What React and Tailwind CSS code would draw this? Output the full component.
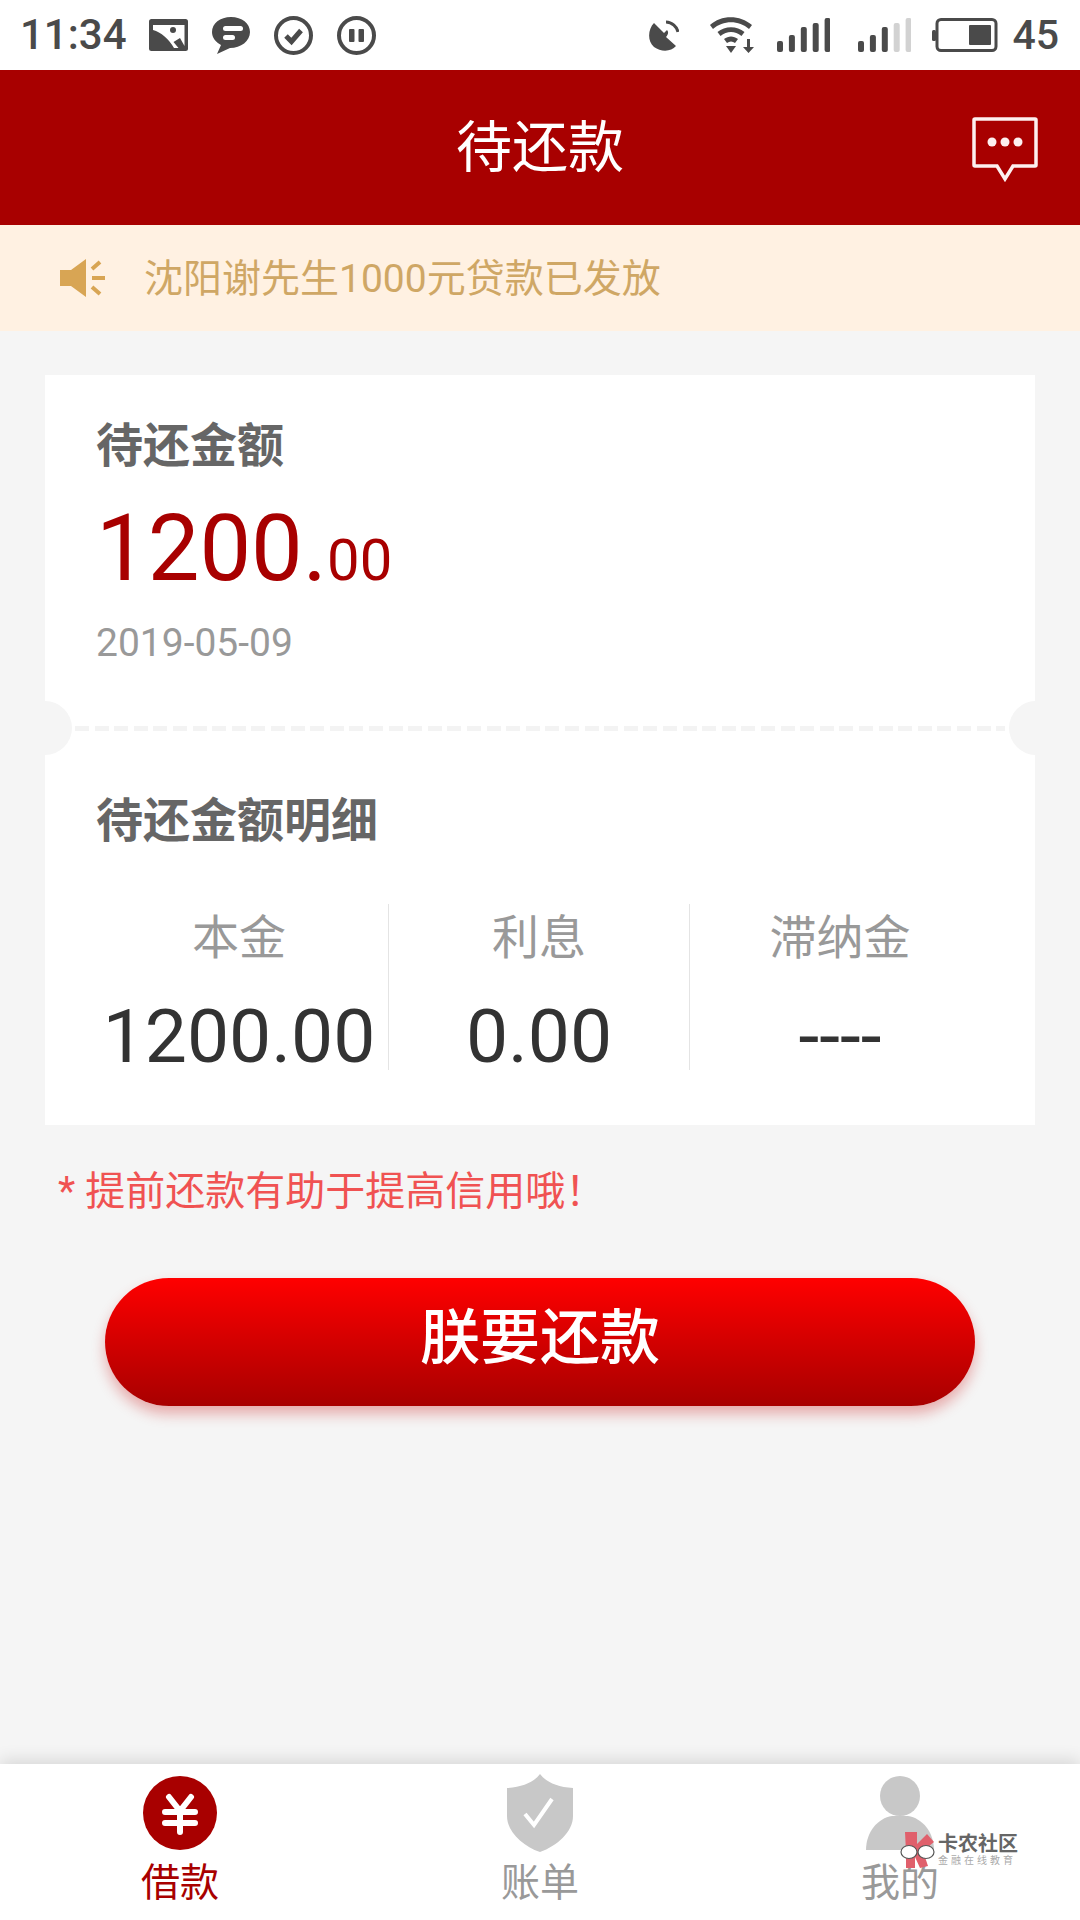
import React from "react";

const cjk = "font-['Roboto','Noto_Sans_CJK_SC',sans-serif]";

const PictureIcon = () => (
  <svg width="39" height="32" viewBox="0 0 39 32">
    <rect width="39" height="32" rx="2.5" fill="#4a4a4a" />
    <path d="M4 6 H35.500 V27 L31 19 L24.500 23 L29.500 29 H25 C20 20 12 13 4 11 Z" fill="#fff" />
    <circle cx="24" cy="11" r="3" fill="#4a4a4a" />
  </svg>
);

const ChatIcon = () => (
  <svg width="38" height="37" viewBox="0 0 38 37">
    <path d="M19 0 C30 0 38 6.500 38 15 C38 24 29 31 18 31 L5 37 L9 28 C3.500 25 0 20.500 0 15 C0 6.500 8 0 19 0 Z" fill="#4a4a4a" />
    <rect x="11" y="9" width="20" height="5" rx="2.500" fill="#fff" />
    <rect x="11" y="18" width="12" height="5" rx="2.500" fill="#fff" />
  </svg>
);

const CheckCircle = () => (
  <svg width="39" height="39" viewBox="0 0 39 39">
    <circle cx="19.500" cy="19.500" r="17.500" fill="none" stroke="#4a4a4a" strokeWidth="4" />
    <path d="M12 20 L17.500 25.500 L27 14.500" fill="none" stroke="#4a4a4a" strokeWidth="5" />
  </svg>
);

const PauseCircle = () => (
  <svg width="39" height="39" viewBox="0 0 39 39">
    <circle cx="19.500" cy="19.500" r="17.500" fill="none" stroke="#4a4a4a" strokeWidth="4" />
    <rect x="12" y="13" width="5.500" height="13" rx="1" fill="#4a4a4a" />
    <rect x="21.500" y="13" width="5.500" height="13" rx="1" fill="#4a4a4a" />
  </svg>
);

const SatelliteIcon = () => (
  <svg width="31" height="31" viewBox="0 0 31 31">
    <path d="M6 3 L16 13 L19 10 C21 12 20 15 18 17 L28 26 C23 32 13 32 6 27 C-1 21 0 9 6 3 Z" fill="#4a4a4a" />
    <path d="M18 2 C24 2 29 7 30 12" fill="none" stroke="#4a4a4a" strokeWidth="3" />
  </svg>
);

const WifiIcon = () => (
  <svg width="46" height="38" viewBox="0 0 46 38">
    <path d="M1 9 C12 -1.500 31 -1.500 43 9 L40 13 C30 4 14 4 4 13 Z" fill="#4a4a4a" />
    <path d="M8.500 16 C16 9.500 28 9.500 35.500 16 L32.500 20 C26 14.500 18 14.500 11.500 20 Z" fill="#4a4a4a" />
    <path d="M15 23 C19.500 19.500 24.500 19.500 29 23 L26 27 C23.500 25 20.500 25 18 27 Z" fill="#4a4a4a" />
    <path d="M17 30 H27 L22 37 Z" fill="#4a4a4a" />
    <path d="M38 20 H41 V28 H45 L39.500 34 L34 28 H38 Z" fill="#4a4a4a" transform="translate(0 3)" />
  </svg>
);

const Signal = ({ dim }) => {
  const bars = [
    { h: 11, c: "#4a4a4a" },
    { h: 17, c: "#4a4a4a" },
    { h: 25, c: "#4a4a4a" },
    { h: 29, c: dim ? "#d2d2d2" : "#4a4a4a" },
    { h: 34, c: dim ? "#d2d2d2" : "#4a4a4a" },
  ];
  return (
    <svg width="53" height="34" viewBox="0 0 53 34">
      {bars.map((b, i) => (
        <rect key={i} x={i * 11.9} y={34 - b.h} width="6" height={b.h} rx="2" fill={b.c} />
      ))}
    </svg>
  );
};

const BatteryIcon = () => (
  <svg width="66" height="34" viewBox="0 0 66 34">
    <rect x="0" y="12" width="4" height="11" rx="1.500" fill="#4a4a4a" />
    <rect x="5" y="1.500" width="59" height="31" rx="4" fill="none" stroke="#4a4a4a" strokeWidth="3" />
    <rect x="37" y="7" width="22" height="20" rx="1" fill="#4a4a4a" />
  </svg>
);

const MessageIcon = () => (
  <svg width="66" height="66" viewBox="0 0 66 66">
    <path d="M3 2 H63 C63.500 2 64 2.500 64 3 V48 C64 48.500 63.500 49 63 49 H41 L33 62 L25 49 H3 C2.500 49 2 48.500 2 48 V3 C2 2.500 2.500 2 3 2 Z" fill="none" stroke="#fdf0f0" strokeWidth="3.500" />
    <circle cx="20" cy="25" r="4.500" fill="#fdf0f0" />
    <circle cx="33" cy="25" r="4.500" fill="#fdf0f0" />
    <circle cx="46" cy="25" r="4.500" fill="#fdf0f0" />
  </svg>
);

const SpeakerIcon = () => (
  <svg width="46" height="38" viewBox="0 0 46 38">
    <path d="M0 11 H11 L26 0 V38 L11 27 H0 Z" fill="#d8a554" />
    <path d="M32 10 L40 3 M32 19 H45 M32 28 L40 35" stroke="#d8a554" strokeWidth="4" fill="none" />
  </svg>
);

const YuanIcon = () => (
  <svg width="74" height="74" viewBox="0 0 74 74">
    <circle cx="37" cy="37" r="37" fill="#a80000" />
    <path d="M26 21 L37 35 L48 21 M22 36 H52 M22 47 H52 M37 35 V56" fill="none" stroke="#fff" strokeWidth="6" strokeLinecap="round" />
  </svg>
);

const ShieldIcon = () => (
  <svg width="66" height="78" viewBox="0 0 66 78">
    <path d="M33 0 C39 8 50 13 66 14 V42 C66 58 50 72 33 78 C16 72 0 58 0 42 V14 C16 13 27 8 33 0 Z" fill="#c8c8c8" />
    <path d="M18 40 L27 51 L45 25" fill="none" stroke="#fff" strokeWidth="4" />
  </svg>
);

const PersonIcon = () => (
  <svg width="68" height="74" viewBox="0 0 68 74">
    <ellipse cx="34" cy="20" rx="20" ry="20" fill="#c8c8c8" />
    <path d="M0 74 C0 56 12 42 26 40 H42 C56 42 68 56 68 74 Z" fill="#c8c8c8" />
  </svg>
);

const WatermarkLogo = () => (
  <svg width="36" height="36" viewBox="0 0 36 36">
    <path d="M5 0 H17 V12 L27 2 L34 10 L23 19 L28 34 L20 36 L15 25 V36 H6 V20 Z" fill="#e0606c" />
    <ellipse cx="9" cy="20" rx="8" ry="6.500" fill="#fff" stroke="#555" strokeWidth="1.200" />
    <ellipse cx="26" cy="20" rx="8" ry="6.500" fill="#fff" stroke="#555" strokeWidth="1.200" />
  </svg>
);

const StatusBar = () => (
  <div className="h-[70px] bg-white flex items-center justify-between pl-[20px] pr-[21px]">
    <div className="flex items-center">
      <span className="font-['Roboto'] font-medium text-[42px] leading-none text-[#4a4a4a] w-[129px]">11:34</span>
      <div className="flex items-center gap-[24px]">
        <PictureIcon />
        <ChatIcon />
        <CheckCircle />
        <PauseCircle />
      </div>
    </div>
    <div className="flex items-center">
      <SatelliteIcon />
      <div className="w-[30px]" />
      <WifiIcon />
      <div className="w-[22px]" />
      <Signal />
      <div className="w-[28px]" />
      <Signal dim />
      <div className="w-[21px]" />
      <BatteryIcon />
      <span className="font-['Roboto'] font-medium text-[41px] leading-none text-[#4a4a4a] ml-[14px]">45</span>
    </div>
  </div>
);

const Detail = ({ label, value, border }) => (
  <div className={`flex-1 flex flex-col items-center h-[166px] pt-[7px] ${border ? "border-r border-[#e4e4e4]" : ""}`}>
    <span className="text-[47px] leading-[54px] text-[#999999]">{label}</span>
    <span className="text-[75px] leading-[84px] mt-[29px] text-[#333333] whitespace-nowrap">{value}</span>
  </div>
);

const Tab = ({ icon, label, active }) => (
  <div className="flex-1 flex flex-col items-center">
    <div className="h-[78px] flex items-center justify-center">{icon}</div>
    <span className={`text-[39px] leading-[46px] mt-[8px] ${active ? "text-[#a80000]" : "text-[#999999]"}`}>{label}</span>
  </div>
);

export default function App() {
  return (
    <div className={`w-[1080px] min-h-[1920px] flex flex-col bg-[#f5f5f5] ${cjk}`}>
      <StatusBar />

      <div className="relative h-[155px] bg-[#a80000] flex items-center justify-center">
        <h1 className="text-[56px] font-normal leading-none text-white">待还款</h1>
        <div className="absolute right-[42px] top-[47px]">
          <MessageIcon />
        </div>
      </div>

      <div className="h-[106px] bg-[#fff1e2] flex items-center pl-[60px]">
        <SpeakerIcon />
        <span className="ml-[38px] mt-[2px] text-[39px] leading-none text-[#cfa765]">沈阳谢先生1000元贷款已发放</span>
      </div>

      <main className="flex-1 flex flex-col">
        <div className="relative mt-[44px] mx-[45px] h-[750px] bg-white overflow-hidden">
          <div className="h-[351px] pl-[51px] pt-[44px]">
            <h2 className="text-[47px] leading-[54px] font-bold text-[#666666]">待还金额</h2>
            <p className="mt-[26px] leading-[100px] text-[92px] text-[#a80000]">
              1200.<span className="text-[58px]">00</span>
            </p>
            <p className="mt-[10px] text-[39px] leading-[46px] text-[#999999]">2019-05-09</p>
          </div>

          <div className="absolute -left-[27px] top-[326px] w-[54px] h-[54px] rounded-full bg-[#f5f5f5]" />
          <div className="absolute -right-[28px] top-[326px] w-[54px] h-[54px] rounded-full bg-[#f5f5f5]" />
          <div className="h-[5px] mx-[30px] bg-[repeating-linear-gradient(90deg,#f3f3f3_0_14px,transparent_14px_19.6px)]" />

          <div className="pl-[51px] pt-[63px]">
            <h2 className="text-[47px] leading-[54px] font-bold text-[#666666]">待还金额明细</h2>
          </div>
          <div className="flex mt-[56px] ml-[45px] mr-[45px]">
            <div className="w-[299px]"><Detail label="本金" value="1200.00" border /></div>
            <div className="w-[301px]"><Detail label="利息" value="0.00" border /></div>
            <div className="flex-1"><Detail label="滞纳金" value="----" /></div>
          </div>
        </div>

        <p className="mt-[44px] ml-[58px] text-[40px] leading-[46px] text-[#f05252]">* 提前还款有助于提高信用哦！</p>

        <button className="mt-[63px] mx-auto w-[870px] h-[128px] pb-[6px] rounded-full bg-gradient-to-b from-[#ff0000] to-[#a80000] text-white text-[60px] font-medium leading-none shadow-[0_8px_14px_rgba(200,0,0,0.3)]">
          朕要还款
        </button>
      </main>

      <nav className="relative h-[156px] bg-white flex pt-[10px] shadow-[0_-4px_16px_rgba(0,0,0,0.12)]">
        <div className="w-[360px] flex"><Tab active icon={<YuanIcon />} label="借款" /></div>
        <div className="w-[360px] flex"><Tab icon={<ShieldIcon />} label="账单" /></div>
        <div className="w-[360px] flex"><Tab icon={<PersonIcon />} label="我的" /></div>
        <div className="absolute left-[900px] top-[68px] flex items-center">
          <WatermarkLogo />
          <div className="flex flex-col ml-[2px]">
            <span className="text-[20px] leading-[22px] font-bold text-[#666666] whitespace-nowrap">卡农社区</span>
            <span className="text-[10px] leading-[12px] tracking-[3px] text-[#aaaaaa] whitespace-nowrap">金融在线教育</span>
          </div>
        </div>
      </nav>
    </div>
  );
}
